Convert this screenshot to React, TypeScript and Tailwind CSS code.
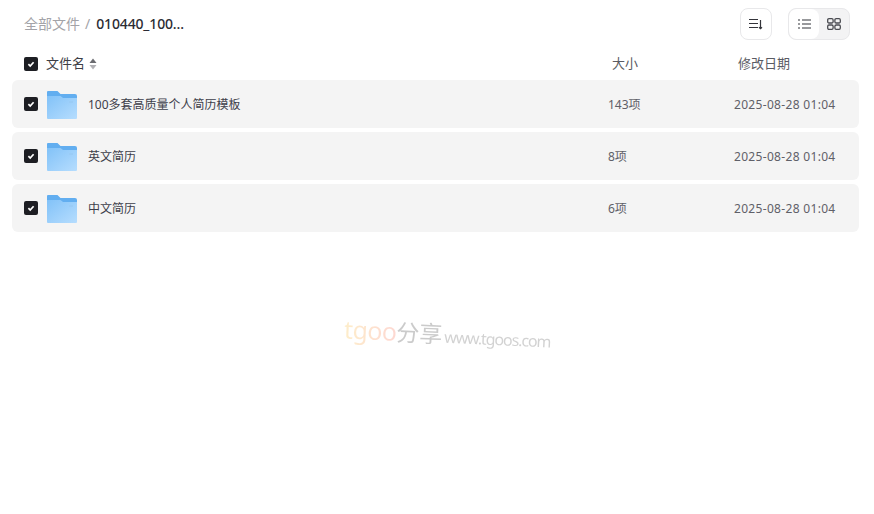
import React from 'react';

const rows = [
  { name: '100多套高质量个人简历模板', size: '143项', date: '2025-08-28 01:04' },
  { name: '英文简历', size: '8项', date: '2025-08-28 01:04' },
  { name: '中文简历', size: '6项', date: '2025-08-28 01:04' },
];

const Check = () => (
  <span className="flex h-[14px] w-[14px] shrink-0 items-center justify-center rounded-[2px] bg-[#1d1e23]">
    <svg width="10" height="10" viewBox="0 0 10 10" fill="none">
      <path d="M2.4 5.2 4.2 7 7.6 3.2" stroke="#fff" strokeWidth="1.7" />
    </svg>
  </span>
);

const Folder = () => (
  <svg width="30" height="28" viewBox="0 0 30 28" className="mt-[1px] shrink-0">
    <defs>
      <linearGradient id="front" x1="0" y1="0" x2="1" y2="1">
        <stop offset="0" stopColor="#82c2f8" />
        <stop offset="1" stopColor="#b6ddfe" />
      </linearGradient>
    </defs>
    <path d="M1 0h9.5l3 3H28a2 2 0 0 1 2 2v3H0V1a1 1 0 0 1 1-1z" fill="#62aef0" />
    <path d="M0 5h13.5L16 7h14v20a1 1 0 0 1-1 1H1a1 1 0 0 1-1-1z" fill="url(#front)" />
    <rect x="22" y="10" width="4" height="2" fill="#9accf6" />
  </svg>
);

export default function App() {
  return (
    <div className="relative h-[514px] w-[874px] overflow-hidden bg-white font-['Noto_Sans','Noto_Sans_CJK_SC',sans-serif] text-[#2b2c33]">
      {/* top bar */}
      <div className="flex h-[48px] items-center justify-between pl-6 pr-6">
        <div className="flex items-center text-sm">
          <span className="text-[#a3a3a8]">全部文件</span>
          <span className="ml-[5px] mr-[6px] text-[#a3a3a8]">/</span>
          <span className="font-medium tracking-[-0.15px]">010440_100...</span>
        </div>
        <div className="flex items-center gap-4">
          <button className="flex h-8 w-8 items-center justify-center rounded-lg border border-[#e8e8ea]">
            <svg width="14" height="12" viewBox="0 0 14 12" fill="none" stroke="#33343a" strokeWidth="1.2">
              <path d="M0 1.5h9M0 5.5h9M0 9.5h9" />
              <path d="M11.5 2v8.5M10 9.2l1.5 1.4 1.5-1.4" />
            </svg>
          </button>
          <div className="flex h-8 w-[62px] overflow-hidden rounded-lg border border-[#e8e8ea] bg-[#f3f3f4]">
            <span className="flex w-[30px] items-center justify-center rounded-lg bg-white">
              <svg width="13" height="10" viewBox="0 0 13 10" fill="none" stroke="#33343a" strokeWidth="1.2">
                <path d="M0 1h2M4 1h9M0 5h2M4 5h9M0 9h2M4 9h9" />
              </svg>
            </span>
            <span className="flex flex-1 items-center justify-center">
              <svg width="14" height="12" viewBox="0 0 14 12" fill="none" stroke="#4a4b51" strokeWidth="1.3">
                <rect x="0.7" y="0.7" width="5.4" height="4.3" rx="1.2" />
                <rect x="7.9" y="0.7" width="5.4" height="4.3" rx="1.2" />
                <rect x="0.7" y="7" width="5.4" height="4.3" rx="1.2" />
                <rect x="7.9" y="7" width="5.4" height="4.3" rx="1.2" />
              </svg>
            </span>
          </div>
        </div>
      </div>

      {/* column header */}
      <div className="flex h-[32px] items-center text-[13px] text-[#5a5b63]">
        <div className="ml-6 flex w-[588px] items-center">
          <Check />
          <span className="ml-2 text-[#3d3e46]">文件名</span>
          <svg width="8" height="12" viewBox="0 0 8 12" className="ml-1">
            <path d="M4 .5 7.5 5h-7z" fill="#6a6b70" />
            <path d="M4 11.5 .5 7h7z" fill="#b0b0b4" />
          </svg>
        </div>
        <span className="w-[126px]">大小</span>
        <span>修改日期</span>
      </div>

      {/* rows */}
      <div className="flex flex-col gap-1 pl-3 pr-[15px]">
        {rows.map(r => (
          <div key={r.name} className="flex h-12 items-center rounded-md bg-[#f4f4f4] text-xs">
            <span className="ml-3"><Check /></span>
            <span className="ml-[9px]"><Folder /></span>
            <span className="ml-[11px] mt-[2px] w-[520px] text-[#3d3e4a]">{r.name}</span>
            <span className="mt-[2px] w-[126px] text-[#5f6068]">{r.size}</span>
            <span className="mt-[2px] tracking-[0.32px] text-[#5f6068]">{r.date}</span>
          </div>
        ))}
      </div>

      {/* watermark */}
      <div className="absolute left-[344px] top-[317px] flex rotate-[2.5deg] items-baseline whitespace-nowrap opacity-60">
        <span className="bg-gradient-to-r from-[#fde3a8] to-[#fdbfb5] bg-clip-text text-[25px] leading-8 tracking-[-0.6px] text-transparent">tgoo</span>
        <span className="text-[23px] leading-8 text-[#a9a9a9]">分享</span>
        <span className="ml-[2px] text-[16px] leading-8 tracking-[-1.1px] text-[#b5b5b5]">www.tgoos.com</span>
      </div>
    </div>
  );
}
